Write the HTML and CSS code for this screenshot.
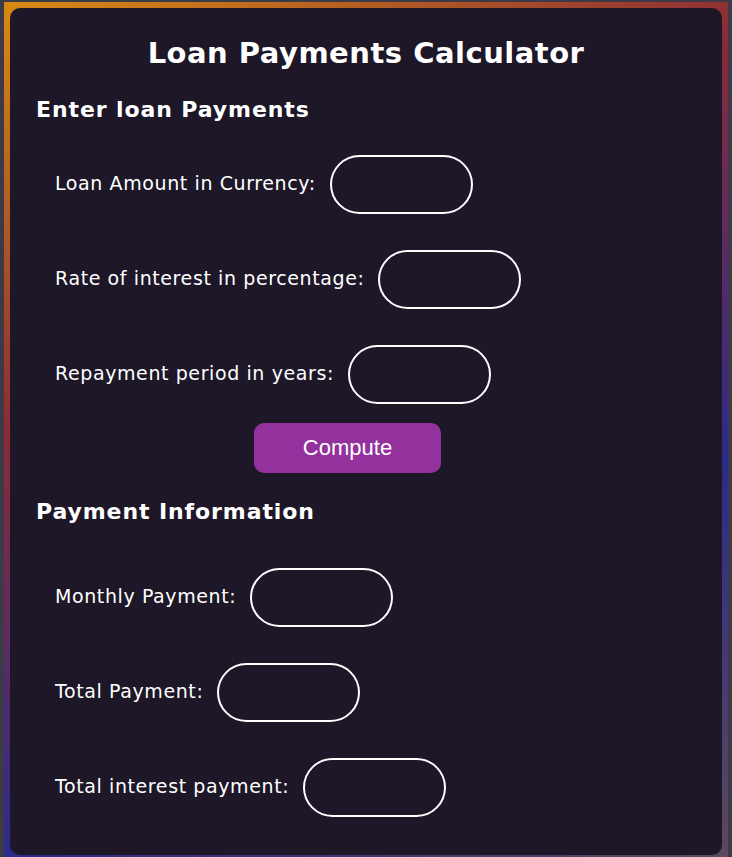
FILE: index.html
```html
<!DOCTYPE html>
<html>
<head>
<meta charset="utf-8">
<title>Loan Payments Calculator</title>
<link rel="stylesheet" href="styles.css">
</head>
<body>
<div class="frame">
  <main class="card">
    <h1 class="title">Loan Payments Calculator</h1>
    <h2 class="section">Enter loan Payments</h2>
    <div class="rows">
      <div class="row"><label class="label">Loan Amount in Currency:</label><input class="field" type="text"></div>
      <div class="row"><label class="label">Rate of interest in percentage:</label><input class="field" type="text"></div>
      <div class="row"><label class="label">Repayment period in years:</label><input class="field" type="text"></div>
    </div>
    <div class="actions"><button class="compute" type="button">Compute</button></div>
    <h2 class="section section-2">Payment Information</h2>
    <div class="rows rows-2">
      <div class="row"><label class="label">Monthly Payment:</label><input class="field" type="text"></div>
      <div class="row"><label class="label">Total Payment:</label><input class="field" type="text"></div>
      <div class="row"><label class="label">Total interest payment:</label><input class="field" type="text"></div>
    </div>
  </main>
</div>
</body>
</html>
```
FILE: styles.css
```css
html, body {
  margin: 0;
  padding: 0;
}
body {
  background: #3d3a48;
  padding: 2px 4px 0 4px;
  font-family: "DejaVu Sans", Verdana, sans-serif;
  color: #ffffff;
}
.frame {
  padding: 6px;
  background: linear-gradient(151deg, #d98a12 0%, #8b2b36 34%, #2c2a8c 68%, #5b4a5a 100%);
}
.card {
  background: #1d1728;
  border-radius: 10px;
  padding: 22px 26px 38px 26px;
}
.title {
  margin: 0;
  font-size: 29px;
  letter-spacing: 0.5px;
  line-height: 46px;
  font-weight: bold;
  text-align: center;
}
.section {
  margin: 19px 0 0 0;
  font-size: 22px;
  letter-spacing: 0.9px;
  line-height: 30px;
  font-weight: bold;
}
.section-2 {
  margin-top: 24px;
}
.rows {
  display: flex;
  flex-direction: column;
  gap: 36px;
  margin-top: 30px;
  padding-left: 19px;
}
.rows-2 {
  margin-top: 41px;
}
.row {
  display: flex;
  align-items: center;
  gap: 14px;
}
.label {
  font-size: 19px;
  letter-spacing: 0.6px;
  padding-bottom: 4px;
}
.field {
  box-sizing: border-box;
  width: 143px;
  height: 59px;
  border: 2px solid #ffffff;
  border-radius: 30px;
  background: transparent;
  color: #fff;
  padding: 0 16px;
  font-size: 18px;
  outline: none;
}
.actions {
  margin-top: 19px;
  padding-left: 218px;
}
.compute {
  width: 187px;
  height: 50px;
  border: none;
  border-radius: 10px;
  background: #94329d;
  color: #ffffff;
  font-family: "Liberation Sans", Arial, sans-serif;
  font-size: 22px;
}
```
